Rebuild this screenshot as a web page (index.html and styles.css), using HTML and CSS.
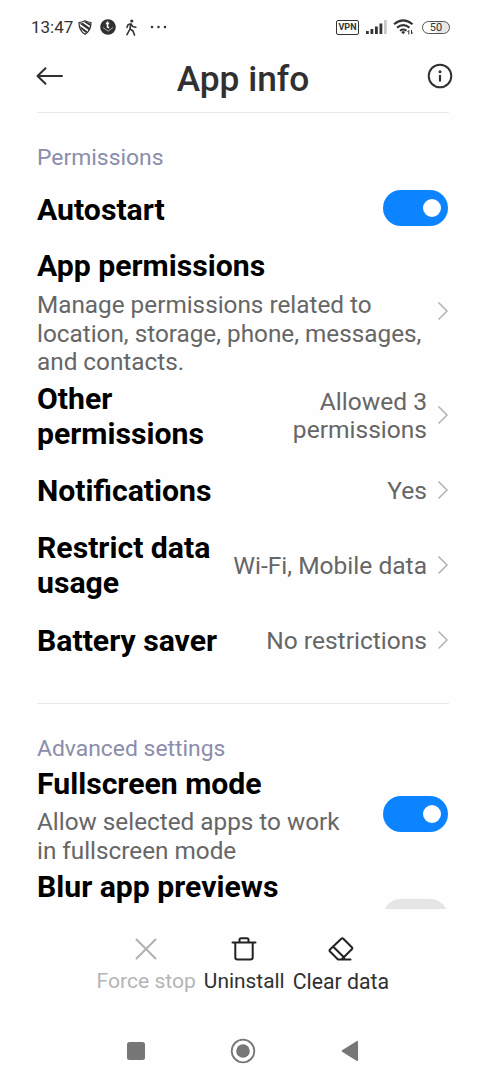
FILE: index.html
```html
<!DOCTYPE html>
<html lang="en">
<head>
<meta charset="utf-8">
<title>App info</title>
<link rel="stylesheet" href="styles.css">
</head>
<body>
<div class="screen">
  <div class="status">
    <span class="clock">13:47</span>
    <svg class="s-shield" width="14" height="15" viewBox="0 0 14 15"><path d="M1 2.500C3 2.500 5 2 7 .8c2 1.200 4 1.700 6 1.700 0 6-2 9.500-6 11.700C3 12 1 8.500 1 2.500Z" fill="none" stroke="#333" stroke-width="1.200"/><path d="M1.500 3.500 5 3l7 5-1 2.300ZM6 2l1.500-.8L13 4v2.500ZM2 6l7.500 5.500L8 13 3 9Z" fill="#333"/></svg>
    <svg class="s-disc" width="16" height="16" viewBox="0 0 16 16"><circle cx="8" cy="8" r="7.800" fill="#303030"/><path d="M3 8.500 8 12.200l5-3.700" fill="none" stroke="#ccc" stroke-width=".8"/><path d="M7.500 2.500v5q0 1.200 1.700 1M5.800 4.600h3.400" fill="none" stroke="#fff" stroke-width="1.500"/></svg>
    <svg class="s-walk" width="12" height="17" viewBox="0 0 12 17"><circle cx="6.800" cy="2" r="1.600" fill="#333"/><path d="M2 8.300 3 5.700 6 4.800 7.600 7.400 10.800 8.300M5.800 5 5 10 2 15.700M5 9.800 8 12l1.500 4" fill="none" stroke="#333" stroke-width="1.600" stroke-linecap="round" stroke-linejoin="round"/></svg>
    <svg class="s-dots" width="17" height="4" viewBox="0 0 17 4"><g fill="#333"><circle cx="2" cy="2" r="1.250"/><circle cx="8.500" cy="2" r="1.250"/><circle cx="15" cy="2" r="1.250"/></g></svg>
    <span class="vpn">VPN</span>
    <svg class="s-signal" width="21" height="14" viewBox="0 0 21 14"><path d="M0 11h2.800v3H0zM4.500 9h2.800v5H4.500zM9 6.500h2.800V14H9zM13.500 3.500h2.800V14h-2.800z" fill="#333"/><path d="M18 0h2.800v14H18z" fill="#c9c9c9"/></svg>
    <svg class="s-wifi" width="22" height="16" viewBox="0 0 22 16"><path d="M1 5.300Q10.200-2.500 19.500 5.300M4 8.600Q10.200 3.600 16.500 8.600M7 11.700Q10.200 9.300 13.500 11.700" fill="none" stroke="#333" stroke-width="2"/><path d="m8.200 13 2-1 2 1-2 2.300Z" fill="#333"/><path d="M15.800 15.500v-4l-1.300 1.500M18.500 11v4l1.300-1.500" fill="none" stroke="#333" stroke-width="1"/></svg>
    <span class="battery">50</span>
  </div>
  <header class="header">
    <svg width="28" height="20" viewBox="0 0 28 20"><path d="M26 10H2M9.500 2.200 1.500 10l8 7.800" fill="none" stroke="#303030" stroke-width="2" stroke-linecap="round" stroke-linejoin="round"/></svg>
    <h1>App info</h1>
    <svg width="26" height="26" viewBox="0 0 26 26"><circle cx="13" cy="13" r="11.300" fill="none" stroke="#303030" stroke-width="2"/><circle cx="13" cy="8.800" r="1.500" fill="#303030"/><path d="M13 12v6.500" stroke="#303030" stroke-width="2.200"/></svg>
  </header>
  <main class="content">
    <section class="permissions">
      <h2>Permissions</h2>
      <div class="row autostart"><h3>Autostart</h3><span class="toggle on"></span></div>
      <div class="row app"><div><h3>App permissions</h3><p>Manage permissions related to<br>location, storage, phone, messages,<br>and contacts.</p></div><svg class="chev" viewBox="0 0 12 20"><path d="m1.500 1.500 8.500 8.500-8.500 8.500"/></svg></div>
      <div class="row two"><h3>Other<br>permissions</h3><span class="value">Allowed 3<br>permissions</span><svg class="chev" viewBox="0 0 12 20"><path d="m1.500 1.500 8.500 8.500-8.500 8.500"/></svg></div>
      <div class="row one"><h3>Notifications</h3><span class="value">Yes</span><svg class="chev" viewBox="0 0 12 20"><path d="m1.500 1.500 8.500 8.500-8.500 8.500"/></svg></div>
      <div class="row two"><h3>Restrict data<br>usage</h3><span class="value">Wi-Fi, Mobile data</span><svg class="chev" viewBox="0 0 12 20"><path d="m1.500 1.500 8.500 8.500-8.500 8.500"/></svg></div>
      <div class="row one"><h3>Battery saver</h3><span class="value">No restrictions</span><svg class="chev" viewBox="0 0 12 20"><path d="m1.500 1.500 8.500 8.500-8.500 8.500"/></svg></div>
    </section>
    <section class="advanced">
      <h2>Advanced settings</h2>
      <div class="row full"><div><h3>Fullscreen mode</h3><p>Allow selected apps to work<br>in fullscreen mode</p></div><span class="toggle on"></span></div>
      <div class="row blur"><h3>Blur app previews</h3><span class="toggle"></span></div>
    </section>
  </main>
  <div class="actions">
    <div class="action disabled"><svg width="26" height="26" viewBox="0 0 26 26"><path d="m3.500 3.500 19 19M22.500 3.500l-19 19"/></svg><span>Force stop</span></div>
    <div class="action uninstall"><svg width="26" height="26" viewBox="0 0 26 26"><path d="M1.500 6.500h23M4.300 6.500v14.700q0 2.300 2.300 2.300h12.800q2.300 0 2.300-2.300V6.500M8.500 6.500V3.700q0-1.500 1.500-1.500h6q1.500 0 1.500 1.500v2.800"/></svg><span>Uninstall</span></div>
    <div class="action clear"><svg width="26" height="26" viewBox="0 0 26 26"><path d="M13.300 2.700q1-1 2 0l8.500 8.500q1 1 0 2L13.500 23.500H10L2 15.500q-1-1 0-2ZM5.300 10.700l11 11M10 23.500h12.500"/></svg><span>Clear data</span></div>
  </div>
  <nav class="nav">
    <svg width="18" height="18" viewBox="0 0 18 18"><rect width="18" height="18" rx="2.500" fill="#777"/></svg>
    <svg width="26" height="26" viewBox="0 0 26 26"><circle cx="13" cy="13" r="11.300" fill="none" stroke="#777" stroke-width="1.800"/><circle cx="13" cy="13" r="6.800" fill="#777"/></svg>
    <svg width="18" height="22" viewBox="0 0 18 22"><path d="M16.300 1.700v18.600L1.500 11Z" fill="#777" stroke="#777" stroke-width="1.500" stroke-linejoin="round"/></svg>
  </nav>
</div>
</body>
</html>
```
FILE: styles.css
```css
* { box-sizing: border-box; margin: 0; padding: 0; }
body { background: #fefefe; font-family: Roboto, "Liberation Sans", sans-serif; }
svg { display: block; flex: none; }
.screen { width: 486px; height: 1080px; display: flex; flex-direction: column; overflow: hidden; }
.status { height: 48px; flex: none; display: flex; align-items: center; padding: 6px 0 0 31px; color: #333; }
.clock { width: 46.500px; font-size: 17px; line-height: 20px; white-space: nowrap; }
.s-disc { margin-left: 8px; }
.s-walk { margin-left: 9px; }
.s-dots { margin-left: 13px; }
.vpn { margin-left: 169.500px; width: 23px; height: 15px; border: 1.5px solid #333; border-radius: 2px; font-size: 9px; line-height: 12px; font-weight: 700; text-align: center; }
.s-signal { margin-left: 7px; }
.s-wifi { margin-left: 6px; }
.battery { margin-left: 7px; width: 28px; height: 13px; border: 1px solid #555; border-radius: 7px; background: linear-gradient(90deg, #fefefe 50%, #e6e6e6 50%); font-size: 11px; line-height: 12px; text-align: center; }
.header { height: 64px; flex: none; margin: 0 33px 0 36px; padding-bottom: 8px; display: flex; align-items: center; justify-content: space-between; }
.header h1 { font-size: 35.300px; line-height: 41px; font-weight: 500; color: #303030; padding-top: 6px; margin-left: -5px; }
.content { height: 797px; flex: none; overflow: hidden; padding: 0 37px; }
.permissions { height: 591px; border-top: 1.500px solid #e9e9e9; padding-top: 30px; }
.advanced { border-top: 1px solid #e8e8e8; padding-top: 30px; }
h2 { font-size: 22.900px; line-height: 29px; font-weight: 400; color: #8a8dab; }
.row { display: flex; align-items: center; justify-content: space-between; }
h3 { font-size: 30.200px; line-height: 35px; font-weight: 700; color: #000; white-space: nowrap; }
p, .value { font-size: 24.300px; line-height: 28.500px; color: #666; white-space: nowrap; }
p { padding-top: 7px; }
.value { margin-left: auto; padding-top: 2px; text-align: right; font-size: 24.550px; }
.chev { width: 12px; height: 20px; margin-left: 10px; fill: none; stroke: #b2b2b2; stroke-width: 1.500; }
.autostart { height: 71px; }
.autostart h3 { padding-top: 3px; }
.app { height: 136px; padding-top: 3px; }
.app p { padding-top: 8px; }
.app .chev { margin-bottom: 3px; }
.two { height: 70px; }
.one { height: 80px; }
.app + .two { height: 71px; padding-top: 1px; }
.app + .two h3 { padding-top: 2px; }
.toggle { width: 65px; height: 36px; margin-right: 1px; border-radius: 18px; background: #e5e5e5; display: flex; align-items: center; justify-content: flex-end; padding-right: 7px; flex: none; }
.toggle.on { background: #0d84ff; }
.toggle.on::after { content: ""; width: 18px; height: 18px; border-radius: 50%; background: #fff; }
.full { height: 106px; }
.full h3 { margin-top: -1px; }
.full .toggle { margin-bottom: 4px; }
.blur { height: 92px; align-items: flex-start; }
.blur .toggle { margin-top: 30px; }
.actions { height: 112px; flex: none; display: flex; padding: 27px 0 0 96.500px; gap: 8px; }
.action { display: flex; flex-direction: column; align-items: center; gap: 5px; font-size: 21.100px; line-height: 28px; color: #303030; white-space: nowrap; }
.action svg { fill: none; stroke: #222; stroke-width: 2; stroke-linejoin: round; stroke-linecap: round; }
.uninstall { font-size: 20.900px; }
.clear { gap: 6px; font-size: 21.250px; }
.action.disabled { color: #b5b5b5; }
.action.disabled svg { stroke: #b0b0b0; }
.nav { height: 59px; flex: none; display: flex; align-items: center; justify-content: space-between; padding: 0 127px 0 127px; }
```
